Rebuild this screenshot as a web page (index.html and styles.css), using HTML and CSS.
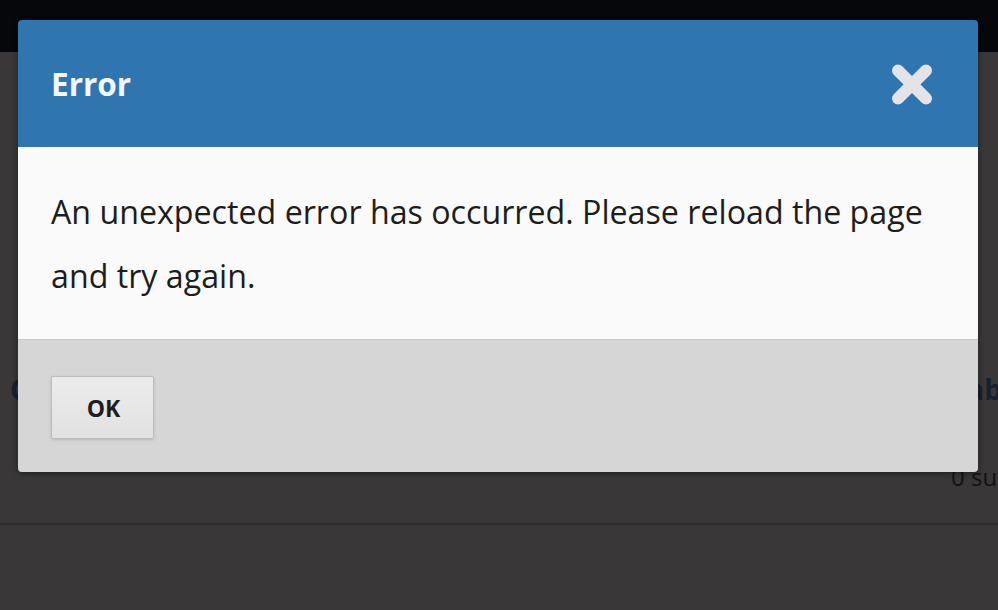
FILE: index.html
```html
<!DOCTYPE html>
<html lang="en">
<head>
<meta charset="utf-8">
<title>Error</title>
<link rel="stylesheet" href="styles.css">
</head>
<body>
<div class="topbar"></div>
<main class="page">
  <section class="panel">
    <div class="panel-row">
      <h2 class="panel-title">Co</h2>
      <h2 class="panel-tab">ab</h2>
    </div>
    <div class="panel-meta">0 su</div>
  </section>
</main>

<div class="dialog" role="dialog">
  <header class="dialog-header">
    <h1 class="dialog-title">Error</h1>
    <button class="dialog-close" aria-label="Close">
      <svg width="42" height="43" viewBox="0 0 42 43" aria-hidden="true">
        <line x1="7" y1="7.5" x2="35" y2="35.5" stroke="#e4e4e8" stroke-width="12" stroke-linecap="round"/>
        <line x1="35" y1="7.5" x2="7" y2="35.5" stroke="#e4e4e8" stroke-width="12" stroke-linecap="round"/>
      </svg>
    </button>
  </header>
  <div class="dialog-body">
    <p>An unexpected error has occurred. Please reload the page and try again.</p>
  </div>
  <footer class="dialog-footer">
    <button class="btn">OK</button>
  </footer>
</div>
</body>
</html>
```

FILE: styles.css
```css
html, body {
  margin: 0;
  padding: 0;
}
body {
  width: 998px;
  height: 610px;
  overflow: hidden;
  background: #393738;
  font-family: "Open Sans", "Noto Sans", sans-serif;
  position: relative;
}
.topbar {
  height: 52px;
  background: #05070b;
}
.page {
  overflow: hidden;
}
.panel {
  height: 473px;
  border-bottom: 2px solid #2f2d2e;
  box-sizing: border-box;
  padding-top: 318px;
}
.panel-row {
  display: flex;
  justify-content: space-between;
  padding-left: 10px;
  margin-right: -4px;
}
.panel-title, .panel-tab {
  margin: 0;
  font-size: 28px;
  font-weight: 700;
  color: #15212d;
}
.panel-meta {
  margin-top: 52px;
  padding-left: 951px;
  white-space: nowrap;
  font-size: 24px;
  color: #121212;
}
.dialog {
  position: absolute;
  left: 18px;
  top: 20px;
  width: 960px;
  border-radius: 4px;
  overflow: hidden;
  box-shadow: 0 2px 6px rgba(0, 0, 0, 0.4);
}
.dialog-header {
  height: 127px;
  background: #2f76b0;
  display: flex;
  align-items: center;
  justify-content: space-between;
  padding: 0 45px 0 33px;
  box-sizing: border-box;
}
.dialog-title {
  margin: 0;
  font-size: 31.5px;
  font-weight: 700;
  color: #f3f7fb;
}
.dialog-close {
  border: 0;
  background: none;
  padding: 0;
  margin-top: 2px;
  display: flex;
}
.dialog-body {
  height: 193px;
  background: #fafafa;
  padding: 33px 33px 0;
  box-sizing: border-box;
  border-bottom: 1px solid #c9c8c9;
}
.dialog-body p {
  margin: 0;
  font-size: 32.2px;
  line-height: 64px;
  color: #1d1d1d;
}
.dialog-footer {
  height: 132px;
  background: #d7d6d7;
  padding: 36px 33px 0;
  box-sizing: border-box;
}
.btn {
  width: 103px;
  height: 63px;
  border: 1px solid #bcbcbc;
  border-radius: 2px;
  background: linear-gradient(#ececec, #e1e1e1);
  box-shadow: 0 1px 3px rgba(0, 0, 0, 0.15);
  font-family: "Open Sans", "Noto Sans", sans-serif;
  font-size: 23px;
  font-weight: 700;
  color: #1e1e1e;
  padding: 0 0 0 2px;
}
```
